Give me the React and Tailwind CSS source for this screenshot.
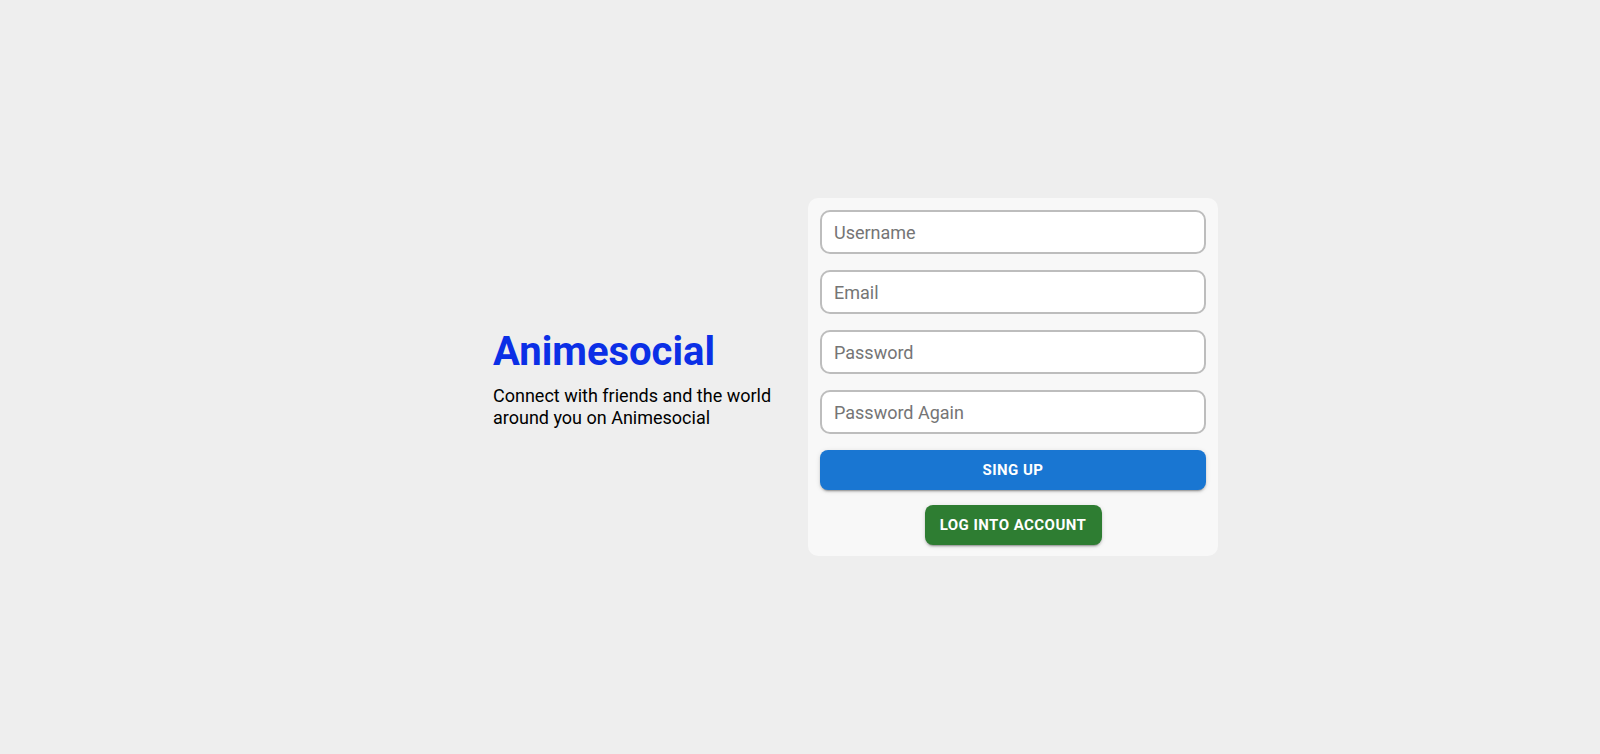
import { useState } from 'react'

const FIELDS = [
  { name: 'username', type: 'text', placeholder: 'Username' },
  { name: 'email', type: 'email', placeholder: 'Email' },
  { name: 'password', type: 'password', placeholder: 'Password' },
  { name: 'passwordAgain', type: 'password', placeholder: 'Password Again' },
]

export default function App() {
  const [values, setValues] = useState({})

  function handleChange(e) {
    setValues((prev) => ({ ...prev, [e.target.name]: e.target.value }))
  }

  return (
    <div
      className="min-h-screen w-full bg-[#eeeeee] flex items-center pl-[493px]"
      style={{ fontFamily: 'Roboto, "Liberation Sans", sans-serif' }}
    >
      <div className="w-[292px] mr-[23px] pt-[2px] flex flex-col">
        <h1 className="text-[40px] leading-[48px] font-bold text-[#0b2fe6]">Animesocial</h1>
        <p className="mt-[9px] text-[18px] leading-[22px] font-normal text-black">
          Connect with friends and the world around you on Animesocial
        </p>
      </div>

      <form
        onSubmit={(e) => e.preventDefault()}
        className="w-[410px] bg-[#f8f8f8] rounded-[10px] pt-3 px-3 pb-[11px] flex flex-col"
      >
        <div className="flex flex-col gap-4">
          {FIELDS.map((field) => (
            <input
              key={field.name}
              name={field.name}
              type={field.type}
              placeholder={field.placeholder}
              value={values[field.name] || ''}
              onChange={handleChange}
              className="h-[44px] w-full bg-white border-2 border-[#bdbdbd] rounded-[10px] px-3 text-[18px] text-black placeholder:text-[#757575] outline-none"
            />
          ))}
        </div>

        <button
          type="submit"
          className="mt-4 h-10 w-full bg-[#1976d2] text-white text-[15px] font-bold uppercase tracking-[0.46px] rounded-lg shadow-[0_3px_1px_-2px_rgba(0,0,0,0.2),0_2px_2px_0_rgba(0,0,0,0.14),0_1px_5px_0_rgba(0,0,0,0.12)]"
        >
          Sing up
        </button>

        <button
          type="button"
          className="mt-[15px] self-center h-10 w-[177px] bg-[#2e7d32] text-white text-[15px] font-bold uppercase tracking-[0.46px] rounded-lg shadow-[0_3px_1px_-2px_rgba(0,0,0,0.2),0_2px_2px_0_rgba(0,0,0,0.14),0_1px_5px_0_rgba(0,0,0,0.12)]"
        >
          Log into account
        </button>
      </form>
    </div>
  )
}
